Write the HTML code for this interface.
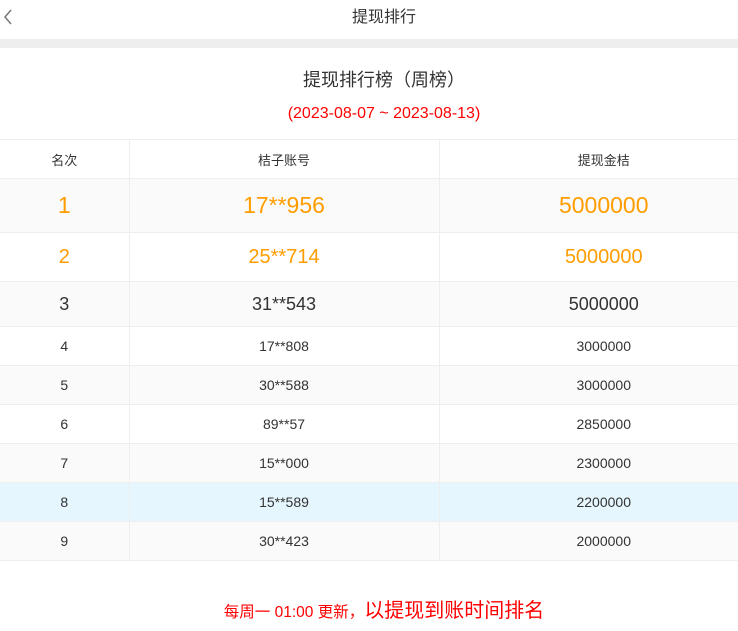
<!DOCTYPE html>
<html><head><meta charset="utf-8"><style>
*{margin:0;padding:0;box-sizing:border-box}
html,body{width:738px;height:631px;overflow:hidden;background:#fff}
.w{width:768px;height:631px;position:relative;font-family:"Liberation Sans","Noto Sans CJK SC",sans-serif;color:#333}
.nav{height:39px;text-align:center;line-height:35px;font-size:16px;color:#333;position:relative}
.band{height:9px;background:#eeeeee}
.title{position:absolute;top:66px;width:100%;text-align:center;font-size:18px;color:#333}
.date{position:absolute;top:105px;width:100%;text-align:center;font-size:16px;color:#f00}
table{position:absolute;top:139px;left:0;width:768px;border-collapse:collapse}
td{border-top:1px solid #eee;border-bottom:1px solid #eee;border-right:1px solid #eee;text-align:center;font-size:14px;color:#333;height:39px}
td:last-child{border-right:none}
tr.h td{font-size:13px}
tr.g td{background:#fafafa}
tr.b td{background:#e6f6fe}
.f{position:absolute;top:594px;width:100%;text-align:center;color:#f00;font-size:15.5px}
.f span{font-size:20px}
</style></head><body><div class="w">
<div class="nav"><svg style="position:absolute;left:3px;top:9px" width="10" height="16" viewBox="0 0 10 16"><path d="M8 1 L2 8 L8 15" fill="none" stroke="#777" stroke-width="1.5"/></svg>提现排行</div>
<div class="band"></div>
<div class="title">提现排行榜（周榜）</div>
<div class="date">(2023-08-07 ~ 2023-08-13)</div>
<table>
<colgroup><col style="width:129px"><col style="width:310px"><col></colgroup>
<tr class="h"><td>名次</td><td>桔子账号</td><td>提现金桔</td></tr>
<tr class="g" style="height:54px"><td style="font-size:23px;color:#ff9d00">1</td><td style="font-size:23px;color:#ff9d00">17**956</td><td style="font-size:23px;color:#ff9d00">5000000</td></tr>
<tr style="height:49px"><td style="font-size:20px;color:#ff9d00">2</td><td style="font-size:20px;color:#ff9d00">25**714</td><td style="font-size:20px;color:#ff9d00">5000000</td></tr>
<tr class="g" style="height:45px"><td style="font-size:18px">3</td><td style="font-size:18px">31**543</td><td style="font-size:18px">5000000</td></tr>
<tr><td>4</td><td>17**808</td><td>3000000</td></tr>
<tr class="g"><td>5</td><td>30**588</td><td>3000000</td></tr>
<tr><td>6</td><td>89**57</td><td>2850000</td></tr>
<tr class="g"><td>7</td><td>15**000</td><td>2300000</td></tr>
<tr class="b"><td>8</td><td>15**589</td><td>2200000</td></tr>
<tr class="g"><td>9</td><td>30**423</td><td>2000000</td></tr>
</table>
<div class="f">每周一 01:00 更新，<span>以提现到账时间排名</span></div>
</div></body></html>
